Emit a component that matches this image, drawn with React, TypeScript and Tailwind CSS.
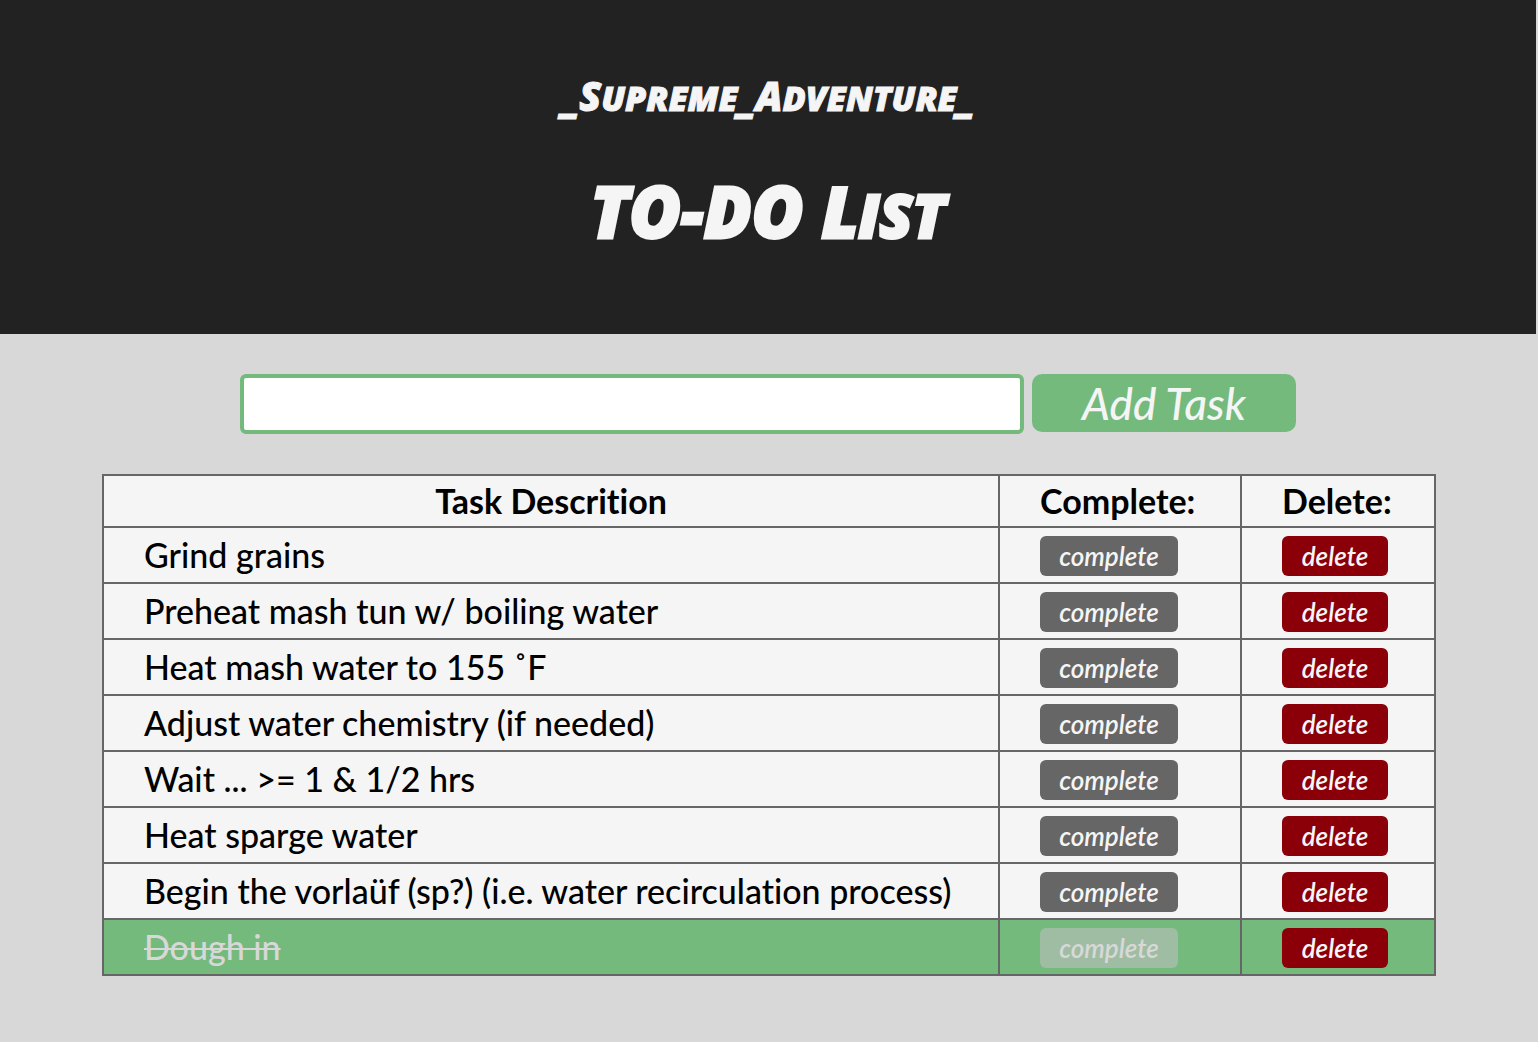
import React from "react";

const tasks = [
  { text: "Grind grains", done: false },
  { text: "Preheat mash tun w/ boiling water", done: false },
  { text: "Heat mash water to 155 ˚F", done: false },
  { text: "Adjust water chemistry (if needed)", done: false },
  { text: "Wait ... >= 1 & 1/2 hrs", done: false },
  { text: "Heat sparge water", done: false },
  { text: "Begin the vorlaüf (sp?) (i.e. water recirculation process)", done: false },
  { text: "Dough in", done: true },
];

export default function App() {
  return (
    <div className="min-h-screen bg-[#d8d8d8] font-['Lato','Open_Sans',sans-serif] font-medium text-black [font-variant-ligatures:none]">
      <header className="mr-0.5 flex flex-col items-center bg-[#222222] pt-18 pb-20 font-['Open_Sans','Noto_Sans',sans-serif] text-[#f5f5f5] italic">
        <h2 className="text-[40px] leading-[48px] font-extrabold [-webkit-text-stroke:1px_#f5f5f5]">
          _S<span className="text-[34px] leading-none uppercase">upreme</span>_A<span className="text-[34px] leading-none uppercase">dventure</span>_
        </h2>
        <h1 className="mt-12 text-[70px] leading-[86px] font-extrabold [-webkit-text-stroke:3px_#f5f5f5]">
          TO-DO L<span className="text-[60px] leading-none uppercase">ist</span>
        </h1>
      </header>
      <main className="px-[102px] pt-10 pb-16">
        <form className="flex justify-center gap-2 pr-[140px] pl-[138px]" onSubmit={(e) => e.preventDefault()}>
          <input aria-label="New task" className="h-15 min-w-0 flex-1 rounded-md border-4 border-[#74ba7c] bg-white px-4 text-[34px] outline-none" />
          <button className="h-[58px] w-[264px] rounded-[10px] bg-[#74ba7c] text-[44px] leading-[58px] text-[#f5f5f5] italic">Add Task</button>
        </form>
        <table className="mt-10 w-full border-collapse bg-[#f5f5f5] text-[34px] leading-[40px]">
          <thead>
            <tr className="h-[52px]">
              <th className="border-2 border-[#666666] font-bold">Task Descrition</th>
              <th className="w-[242px] border-2 border-[#666666] px-10 text-left font-bold">Complete:</th>
              <th className="w-[194px] border-2 border-[#666666] px-10 text-left font-bold">Delete:</th>
            </tr>
          </thead>
          <tbody>
            {tasks.map((t) => (
              <tr key={t.text} className={t.done ? "h-14 bg-[#74ba7c]" : "h-14"}>
                <td className={t.done ? "border-2 border-[#666666] px-10 text-[#d8d8d8] line-through decoration-2" : "border-2 border-[#666666] px-10"}>{t.text}</td>
                <td className="border-2 border-[#666666] px-10 pt-2 pb-1.5">
                  <button className={t.done ? "block h-10 w-[138px] rounded-md bg-[#9fbda3] text-[26px] leading-[38px] font-semibold text-[#d8d8d8] italic" : "block h-10 w-[138px] rounded-md bg-[#666666] text-[26px] leading-[38px] font-semibold text-[#f5f5f5] italic"}>complete</button>
                </td>
                <td className="border-2 border-[#666666] px-10 pt-2 pb-1.5">
                  <button className="block h-10 w-[106px] rounded-md bg-[#8b0008] text-[26px] leading-[38px] font-semibold text-[#f5f5f5] italic">delete</button>
                </td>
              </tr>
            ))}
          </tbody>
        </table>
      </main>
    </div>
  );
}
